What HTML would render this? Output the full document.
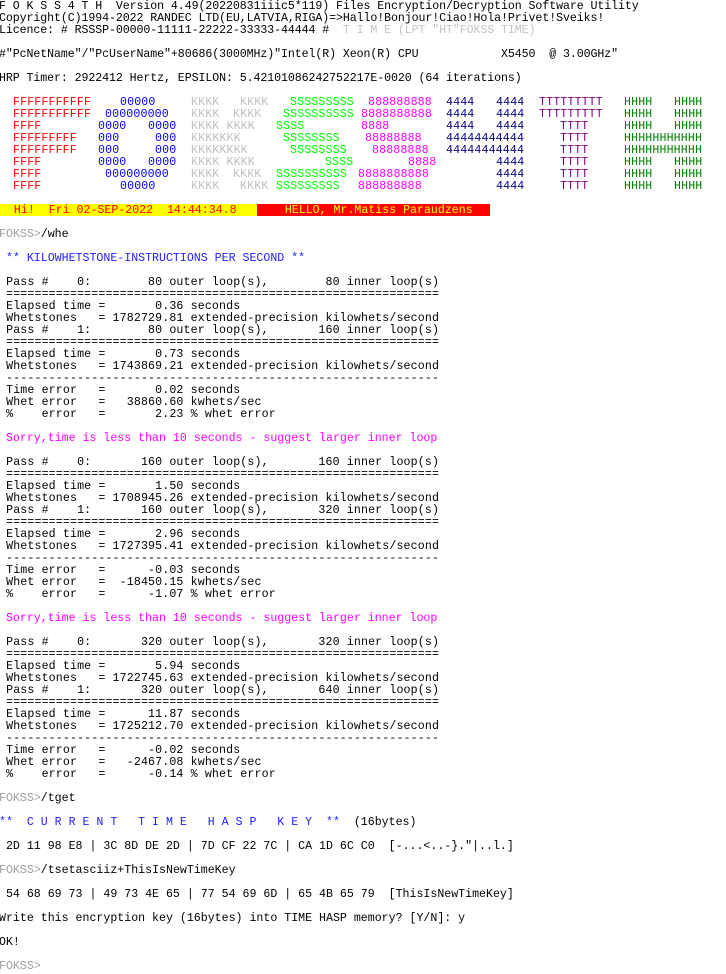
<!DOCTYPE html>
<html><head><meta charset="utf-8"><style>
html,body{margin:0;padding:0;background:#fff;width:726px;height:974px;overflow:hidden}
#t{position:absolute;left:-1px;top:1px;font-family:"Liberation Mono",monospace;font-size:11.6px;color:#000}
.l{height:12px;line-height:12px;white-space:pre}
.h{letter-spacing:-0.08px}
.w{letter-spacing:0.14px}
.g{color:#a0a0a0}
.gl{color:#c4c4c4}
.b{color:#1f1fff}
.m{color:#ff00ff}
#logo{position:absolute;left:0;top:97px;font-family:"Liberation Mono",monospace;font-size:11.6px;letter-spacing:0.14px}
#logo div{position:relative;height:12px;line-height:12px}
#logo span{position:absolute;white-space:pre}
.F{color:#ff0000}.O{color:#0000ff}.K{color:#c0c0c0}.S{color:#00ff00}.E{color:#ff00ff}.N{color:#000080}.T{color:#800080}.H{color:#008000}
#bar{position:absolute;top:204px;left:0;height:12px;font-family:"Liberation Mono",monospace;font-size:11.6px;line-height:13px;white-space:pre}
</style></head><body>
<div id="t">
<div class="l h">F O K S S 4 T H  Version 4.49(20220831iiic5*119) Files Encryption/Decryption Software Utility</div>
<div class="l h">Copyright(C)1994-2022 RANDEC LTD(EU,LATVIA,RIGA)=&gt;Hallo!Bonjour!Ciao!Hola!Privet!Sveiks!</div>
<div class="l h">Licence: # RSSSP-00000-11111-22222-33333-44444 #  <span class="gl">T I M E (LPT "HT"FOKSS TIME)</span></div>
<div class="l"> </div>
<div class="l h">#"PcNetName"/"PcUserName"+80686(3000MHz)"Intel(R) Xeon(R) CPU            X5450  @ 3.00GHz"</div>
<div class="l"> </div>
<div class="l h">HRP Timer: 2922412 Hertz, EPSILON: 5.42101086242752217E-0020 (64 iterations)</div>
<div class="l"> </div>
<div class="l"> </div><div class="l"> </div><div class="l"> </div><div class="l"> </div><div class="l"> </div><div class="l"> </div><div class="l"> </div><div class="l"> </div>
<div class="l"> </div>
<div class="l"> </div>
<div class="l"> </div>
<div class="l"><span class="g">FOKSS&gt;</span>/whe</div>
<div class="l"> </div>
<div class="l b"> ** KILOWHETSTONE-INSTRUCTIONS PER SECOND **</div>
<div class="l"> </div>
<div class="l w"> Pass #    0:        80 outer loop(s),        80 inner loop(s)</div>
<div class="l w"> =============================================================</div>
<div class="l w"> Elapsed time =       0.36 seconds</div>
<div class="l w"> Whetstones   = 1782729.81 extended-precision kilowhets/second</div>
<div class="l w"> Pass #    1:        80 outer loop(s),       160 inner loop(s)</div>
<div class="l w"> =============================================================</div>
<div class="l w"> Elapsed time =       0.73 seconds</div>
<div class="l w"> Whetstones   = 1743869.21 extended-precision kilowhets/second</div>
<div class="l w"> -------------------------------------------------------------</div>
<div class="l w"> Time error   =       0.02 seconds</div>
<div class="l w"> Whet error   =   38860.60 kwhets/sec</div>
<div class="l w"> %    error   =       2.23 % whet error</div>
<div class="l"> </div>
<div class="l m"> Sorry,time is less than 10 seconds - suggest larger inner loop</div>
<div class="l"> </div>
<div class="l w"> Pass #    0:       160 outer loop(s),       160 inner loop(s)</div>
<div class="l w"> =============================================================</div>
<div class="l w"> Elapsed time =       1.50 seconds</div>
<div class="l w"> Whetstones   = 1708945.26 extended-precision kilowhets/second</div>
<div class="l w"> Pass #    1:       160 outer loop(s),       320 inner loop(s)</div>
<div class="l w"> =============================================================</div>
<div class="l w"> Elapsed time =       2.96 seconds</div>
<div class="l w"> Whetstones   = 1727395.41 extended-precision kilowhets/second</div>
<div class="l w"> -------------------------------------------------------------</div>
<div class="l w"> Time error   =      -0.03 seconds</div>
<div class="l w"> Whet error   =  -18450.15 kwhets/sec</div>
<div class="l w"> %    error   =      -1.07 % whet error</div>
<div class="l"> </div>
<div class="l m"> Sorry,time is less than 10 seconds - suggest larger inner loop</div>
<div class="l"> </div>
<div class="l w"> Pass #    0:       320 outer loop(s),       320 inner loop(s)</div>
<div class="l w"> =============================================================</div>
<div class="l w"> Elapsed time =       5.94 seconds</div>
<div class="l w"> Whetstones   = 1722745.63 extended-precision kilowhets/second</div>
<div class="l w"> Pass #    1:       320 outer loop(s),       640 inner loop(s)</div>
<div class="l w"> =============================================================</div>
<div class="l w"> Elapsed time =      11.87 seconds</div>
<div class="l w"> Whetstones   = 1725212.70 extended-precision kilowhets/second</div>
<div class="l w"> -------------------------------------------------------------</div>
<div class="l w"> Time error   =      -0.02 seconds</div>
<div class="l w"> Whet error   =   -2467.08 kwhets/sec</div>
<div class="l w"> %    error   =      -0.14 % whet error</div>
<div class="l"> </div>
<div class="l"><span class="g">FOKSS&gt;</span>/tget</div>
<div class="l"> </div>
<div class="l"><span class="b">**  C U R R E N T   T I M E   H A S P   K E Y  **</span>  (16bytes)</div>
<div class="l"> </div>
<div class="l"> 2D 11 98 E8 | 3C 8D DE 2D | 7D CF 22 7C | CA 1D 6C C0  [-...&lt;..-}."|..l.]</div>
<div class="l"> </div>
<div class="l"><span class="g">FOKSS&gt;</span>/tsetasciiz+ThisIsNewTimeKey</div>
<div class="l"> </div>
<div class="l"> 54 68 69 73 | 49 73 4E 65 | 77 54 69 6D | 65 4B 65 79  [ThisIsNewTimeKey]</div>
<div class="l"> </div>
<div class="l">Write this encryption key (16bytes) into TIME HASP memory? [Y/N]: y</div>
<div class="l"> </div>
<div class="l">OK!</div>
<div class="l"> </div>
<div class="l"><span class="g">FOKSS&gt;</span></div>
</div>

<div id="logo">
<div><span class="F" style="left:13px">FFFFFFFFFFF</span><span class="O" style="left:120px">00000</span><span class="K" style="left:191px">KKKK</span><span class="K" style="left:240px">KKKK</span><span class="S" style="left:290px">SSSSSSSSS</span><span class="E" style="left:368px">888888888</span><span class="N" style="left:446px">4444</span><span class="N" style="left:496px">4444</span><span class="T" style="left:539px">TTTTTTTTT</span><span class="H" style="left:624px">HHHH</span><span class="H" style="left:674px">HHHH</span></div>
<div><span class="F" style="left:13px">FFFFFFFFFFF</span><span class="O" style="left:105px">000000000</span><span class="K" style="left:191px">KKKK</span><span class="K" style="left:233px">KKKK</span><span class="S" style="left:283px">SSSSSSSSSS</span><span class="E" style="left:361px">8888888888</span><span class="N" style="left:446px">4444</span><span class="N" style="left:496px">4444</span><span class="T" style="left:539px">TTTTTTTTT</span><span class="H" style="left:624px">HHHH</span><span class="H" style="left:674px">HHHH</span></div>
<div><span class="F" style="left:13px">FFFF</span><span class="O" style="left:98px">0000</span><span class="O" style="left:148px">0000</span><span class="K" style="left:191px">KKKK KKKK</span><span class="S" style="left:276px">SSSS</span><span class="E" style="left:361px">8888</span><span class="N" style="left:446px">4444</span><span class="N" style="left:496px">4444</span><span class="T" style="left:560px">TTTT</span><span class="H" style="left:624px">HHHH</span><span class="H" style="left:674px">HHHH</span></div>
<div><span class="F" style="left:13px">FFFFFFFFF</span><span class="O" style="left:98px">000</span><span class="O" style="left:155px">000</span><span class="K" style="left:191px">KKKKKKK</span><span class="S" style="left:283px">SSSSSSSS</span><span class="E" style="left:365px">88888888</span><span class="N" style="left:446px">44444444444</span><span class="T" style="left:560px">TTTT</span><span class="H" style="left:624px">HHHHHHHHHHH</span></div>
<div><span class="F" style="left:13px">FFFFFFFFF</span><span class="O" style="left:98px">000</span><span class="O" style="left:155px">000</span><span class="K" style="left:191px">KKKKKKKK</span><span class="S" style="left:290px">SSSSSSSS</span><span class="E" style="left:372px">88888888</span><span class="N" style="left:446px">44444444444</span><span class="T" style="left:560px">TTTT</span><span class="H" style="left:624px">HHHHHHHHHHH</span></div>
<div><span class="F" style="left:13px">FFFF</span><span class="O" style="left:98px">0000</span><span class="O" style="left:148px">0000</span><span class="K" style="left:191px">KKKK KKKK</span><span class="S" style="left:325px">SSSS</span><span class="E" style="left:408px">8888</span><span class="N" style="left:496px">4444</span><span class="T" style="left:560px">TTTT</span><span class="H" style="left:624px">HHHH</span><span class="H" style="left:674px">HHHH</span></div>
<div><span class="F" style="left:13px">FFFF</span><span class="O" style="left:105px">000000000</span><span class="K" style="left:191px">KKKK</span><span class="K" style="left:233px">KKKK</span><span class="S" style="left:276px">SSSSSSSSSS</span><span class="E" style="left:358px">8888888888</span><span class="N" style="left:496px">4444</span><span class="T" style="left:560px">TTTT</span><span class="H" style="left:624px">HHHH</span><span class="H" style="left:674px">HHHH</span></div>
<div><span class="F" style="left:13px">FFFF</span><span class="O" style="left:120px">00000</span><span class="K" style="left:191px">KKKK</span><span class="K" style="left:240px">KKKK</span><span class="S" style="left:276px">SSSSSSSSS</span><span class="E" style="left:358px">888888888</span><span class="N" style="left:496px">4444</span><span class="T" style="left:560px">TTTT</span><span class="H" style="left:624px">HHHH</span><span class="H" style="left:674px">HHHH</span></div>
</div>

<div id="bar"><span style="position:absolute;left:0;top:0;width:257px;height:12px;background:#ffff00;color:#ff0000">  Hi!  Fri 02-SEP-2022  14:44:34.8</span><span style="position:absolute;left:257px;top:0;width:233px;height:12px;background:#ff0000;color:#ffff00">    HELLO, Mr.Matiss Paraudzens</span></div>
</body></html>
